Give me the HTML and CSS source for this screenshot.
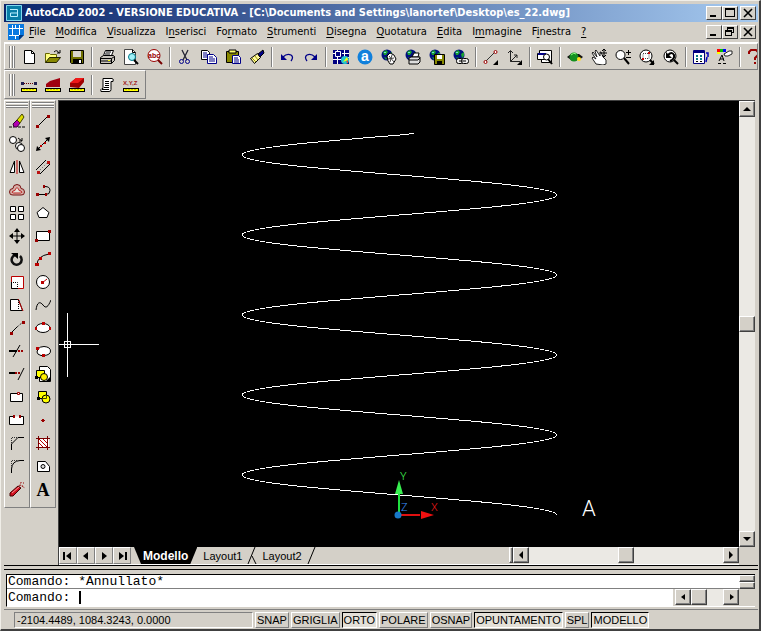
FILE: index.html
```html
<!DOCTYPE html>
<html lang="it">
<head>
<meta charset="utf-8">
<title>AutoCAD 2002</title>
<link rel="stylesheet" href="styles.css">
</head>
<body>
<svg class="defs" aria-hidden="true">
  <defs>
    <g id="globe"><circle cx="6" cy="6" r="5.5" fill="#001080"/><path d="M2 3l3-2 2 2-2 3-2 0zM8 5l3-2v4l-2 2zM3 8l3 1-1 2z" fill="#18a030"/><path d="M3 3h2v1H3z" fill="#70e0e0"/></g>
    <g id="ruler"><path d="M0 11h16v4H0z" fill="#000"/><path d="M1 12h14v2H1z" fill="#ff0"/><path d="M3 12v1M6 12v1M9 12v1M12 12v1" stroke="#880"/></g>
    <g id="corner"><path d="M15 11v5h-5z"/></g>
  </defs>
</svg>
<div class="window">
  <header class="titlebar">
    <svg class="app-icon" viewBox="0 0 16 16"><path d="M0 0h16v16H0z" fill="#087da6"/><path d="M.5.500h15v15H.5z" fill="none" stroke="#80d8f0"/><path d="M4 4.500h7.500v7h-7v-3.500h7" fill="none" stroke="#b9f0ff"/></svg>
    <h1>AutoCAD 2002 - VERSIONE EDUCATIVA - [C:\Documents and Settings\lanortef\Desktop\es_22.dwg]</h1>
    <div class="controls">
      <button aria-label="Riduci a icona"><svg viewBox="0 0 12 10"><path d="M2 7h6v2H2z"/></svg></button>
      <button aria-label="Ingrandisci"><svg viewBox="0 0 12 10"><path d="M1 0h10v9H1zM2 2v6h8V2z" fill-rule="evenodd"/></svg></button>
      <button class="close" aria-label="Chiudi"><svg viewBox="0 0 12 10"><path d="M2 1l8 8M10 1L2 9" stroke="#000" stroke-width="1.6"/></svg></button>
    </div>
  </header>
  <nav class="menubar">
    <svg class="doc-icon" viewBox="0 0 16 16"><path d="M0 0h16v11l-5 5H0z" fill="#0878e0"/><path d="M4.500 1v10M11.500 1v10M1 4.500h14M1 11.500h11M7.500 4v-3M7.500 12v3" fill="none" stroke="#fff"/><path d="M5 5h6v6H5z" fill="#0878e0"/><path d="M16 11h-5v5z" fill="#003880"/></svg>
    <div class="menus">
      <button><u>F</u>ile</button><button><u>M</u>odifica</button><button><u>V</u>isualizza</button><button>I<u>n</u>serisci</button><button>Fo<u>r</u>mato</button><button><u>S</u>trumenti</button><button><u>D</u>isegna</button><button><u>Q</u>uotatura</button><button><u>E</u>dita</button><button>I<u>m</u>magine</button><button>F<u>i</u>nestra</button><button><u>?</u></button>
    </div>
    <div class="controls">
      <button aria-label="Riduci disegno"><svg viewBox="0 0 12 10"><path d="M2 7h6v2H2z"/></svg></button>
      <button aria-label="Ripristina disegno"><svg viewBox="0 0 12 10"><path d="M3 0h7v6H8V5h1V2H4v1H3zM1 3h7v6H1zM2 5v3h5V5z" fill-rule="evenodd"/></svg></button>
      <button class="close" aria-label="Chiudi disegno"><svg viewBox="0 0 12 10"><path d="M2 1l8 8M10 1L2 9" stroke="#000" stroke-width="1.6"/></svg></button>
    </div>
  </nav>

  <div class="toolbar standard" role="toolbar" aria-label="Standard">
    <i class="grip"></i>
    <button aria-label="Nuovo"><svg viewBox="0 0 16 16"><path d="M3.500 1.500h7l3 3v10h-10z" fill="#fff" stroke="#000"/><path d="M10.500 1.500v3h3" fill="none" stroke="#000"/></svg></button>
    <button aria-label="Apri"><svg viewBox="0 0 16 16"><path d="M.5 13.500v-9h4l1 1h6v3" fill="#ffff80" stroke="#660"/><path d="M.5 13.500l4-5h11l-4 5z" fill="#880" stroke="#220"/><path d="M9 3q3-3 5 1M12 4h3V1" fill="none" stroke="#000"/></svg></button>
    <button aria-label="Salva"><svg viewBox="0 0 16 16"><path d="M1.500 1.500h13v13h-12l-1-1z" fill="#707000" stroke="#000"/><path d="M4 2h8v6H4z" fill="#d8d4cc"/><path d="M4 10h9v5H4z"/><path d="M10 11h2v3h-2z" fill="#fff"/></svg></button>
    <i class="sep"></i>
    <button aria-label="Stampa"><svg viewBox="0 0 16 16"><path d="M4.500 6.500l2-5h8l-2 5z" fill="#fff" stroke="#000"/><path d="M7 3h5M6 5h5" stroke="#000"/><path d="M1.500 8.500l3-2h10l1 1v4l-3 3h-11z" fill="#c8c4bc" stroke="#000"/><path d="M1.500 9.500h11l3-2M12.500 9.500v5M2 12h10" fill="none" stroke="#000"/><path d="M9 11h2v1H9z" fill="#ff0"/></svg></button>
    <button aria-label="Anteprima"><svg viewBox="0 0 16 16"><path d="M1.500.5h8l3 3v12h-11z" fill="#fff" stroke="#444"/><path d="M9.500.5v3h3" fill="none" stroke="#000"/><circle cx="9" cy="8" r="3.500" fill="#a0f0f8" stroke="#078"/><path d="M11 11l4 4" stroke="#000" stroke-width="2"/></svg></button>
    <button aria-label="Trova"><svg viewBox="0 0 16 16"><circle cx="7" cy="6.500" r="6" fill="#fff" stroke="#900"/><path d="M11 11l4 4" stroke="#700" stroke-width="2"/><text x="1" y="9" class="abc">abc</text></svg></button>
    <i class="sep"></i>
    <button aria-label="Taglia"><svg viewBox="0 0 16 16"><path d="M5 1l5 10M11 1L6 11" stroke="#223" stroke-width="1.300"/><circle cx="4.500" cy="12.500" r="2" fill="none" stroke="#008"/><circle cx="10.500" cy="12.500" r="2" fill="none" stroke="#008"/></svg></button>
    <button aria-label="Copia"><svg viewBox="0 0 16 16"><path d="M.5 1.500h6l2 2v7h-8z" fill="#fff" stroke="#000"/><path d="M2 4h4M2 6h5M2 8h5" stroke="#008"/><path d="M6.500 5.500h6l3 3v6h-9z" fill="#fff" stroke="#008"/><path d="M8 8h4M8 10h6M8 12h6" stroke="#008"/></svg></button>
    <button aria-label="Incolla"><svg viewBox="0 0 16 16"><path d="M1.500 2.500h12v11h-12z" fill="#880" stroke="#000"/><path d="M4 1h7v3H4z" fill="#ffff70" stroke="#000"/><path d="M7.500 6.500h6l2 2v6h-8z" fill="#fff" stroke="#008"/><path d="M9 9h4M9 11h5M9 13h5" stroke="#008"/></svg></button>
    <button aria-label="Corrispondenza proprietà"><svg viewBox="0 0 16 16"><path d="M1.500 9.500l7-5 3 4-6 6z" fill="#fff8a0" stroke="#000"/><path d="M3 9l4 4M6 7l3 4" stroke="#990"/><path d="M9 5l5-4 1 3-4 4z" fill="#008" stroke="#000"/></svg></button>
    <i class="sep"></i>
    <button aria-label="Annulla"><svg viewBox="0 0 16 16"><path d="M4 8q4-4 8-2 3 2 0 6" fill="none" stroke="#008" stroke-width="1.300"/><path d="M2 5v6h6z" fill="#008"/></svg></button>
    <button aria-label="Ripeti"><svg viewBox="0 0 16 16"><path d="M12 8Q8 4 4 6q-3 2 0 6" fill="none" stroke="#008" stroke-width="1.300"/><path d="M14 5v6H8z" fill="#008"/></svg></button>
    <i class="sep"></i>
    <button aria-label="Today"><svg viewBox="0 0 16 16"><path d="M0 1h16v14H0z" fill="#000080"/><path d="M4.500 1v14M0 10.500h8M9 4.500h7M9 8.500h7M11.500 1v7M0 4.500h3" stroke="#fff"/><path d="M2.500 2.500h5v5h-5z" fill="#000080" stroke="#fff"/><circle cx="12" cy="11" r="4" fill="#20c8d0"/><path d="M10 13l4-5 1 3z" fill="#ff0"/><path d="M13 13l2-2v3z" fill="#e33"/></svg></button>
    <button aria-label="Point A"><svg viewBox="0 0 16 16"><circle cx="8" cy="8" r="7.500" fill="#1080dc"/><text x="4" y="12" class="point-a">a</text></svg></button>
    <button aria-label="Incontro"><svg viewBox="0 0 16 16"><use href="#globe"/><path d="M6 7l3-3 4 2 2 4-3 5H9l-2-3z" fill="#fff" stroke="#000"/><path d="M8 7l5 6M11 6l-2 7M7 10l6-1" stroke="#444"/></svg></button>
    <button aria-label="Pubblica"><svg viewBox="0 0 16 16"><use href="#globe"/><path d="M7 8l2-4h5l-1 4z" fill="#fff" stroke="#000"/><path d="M4 9l2-1h9v5l-2 2H4z" fill="#ddd" stroke="#000"/><path d="M4 11h9l2-2" fill="none" stroke="#000"/></svg></button>
    <button aria-label="eTransmit"><svg viewBox="0 0 16 16"><use href="#globe"/><path d="M5.500 5.500h10v10h-10z" fill="#880" stroke="#000"/><path d="M8 6h5v4H8z" fill="#fff"/><path d="M8 12h5v3H8z"/></svg></button>
    <button aria-label="Collegamento"><svg viewBox="0 0 16 16"><use href="#globe"/><rect x="3.500" y="9.500" width="7" height="5" rx="2" fill="#eee" stroke="#000"/><rect x="8.500" y="9.500" width="7" height="5" rx="2" fill="#eee" stroke="#000"/><path d="M6 12h7" stroke="#000"/></svg></button>
    <i class="sep"></i>
    <button aria-label="Punto di tracciamento"><svg viewBox="0 0 16 16"><path d="M2 13L12 3" stroke="#333"/><circle cx="2.500" cy="13" r="1.500" fill="#fff" stroke="#900"/><circle cx="12.500" cy="3" r="1.500" fill="#fff" stroke="#900"/><use href="#corner"/></svg></button>
    <button aria-label="UCS"><svg viewBox="0 0 16 16"><path d="M3.500 2v10.500H13M3.500 12.500L10 6M1 4l2.500-2.500L6 4M7 6h3v3" fill="none" stroke="#222"/><use href="#corner"/></svg></button>
    <i class="sep"></i>
    <button aria-label="Viste con nome"><svg viewBox="0 0 16 16"><path d="M2.500 4V1.500h12v12h-10V11" fill="#fff" stroke="#000"/><path d="M.5 4.500h8v6h-8z" fill="#fff" stroke="#000"/><path d="M1 4h8v2H1z" fill="#008"/><circle cx="9.500" cy="8" r="3" fill="#fff" stroke="#000"/><path d="M11 10l4 5" stroke="#000" stroke-width="2"/></svg></button>
    <i class="sep"></i>
    <button aria-label="Orbita 3D"><svg viewBox="0 0 16 16"><path d="M0 8l4-3h8l4 3-4 3H4z" fill="#111"/><circle cx="7" cy="8" r="4.500" fill="#149020"/><path d="M4 6q3-3 5-1" fill="none" stroke="#90ff80"/><circle cx="12" cy="10" r="2" fill="#ffe020"/></svg></button>
    <button aria-label="Pan in tempo reale"><svg viewBox="0 0 16 16"><path d="M5 15L1 9l1-1 3 2-4-6 1-1 4 5-2-6 1-1 4 6 0-4 1 0 2 5 3 3v4l-3 1z" fill="#fff" stroke="#222"/><path d="M13 0v8M9 4h7M11 2l2-2 2 2M11 6l2 2 2-2" fill="none" stroke="#000"/></svg></button>
    <button aria-label="Zoom in tempo reale"><svg viewBox="0 0 16 16"><circle cx="5.500" cy="6" r="4.500" fill="#fff" stroke="#000"/><path d="M9 9l5 6" stroke="#000" stroke-width="2"/><path d="M11 3.500h5M13.500 1v5M11 8.500h5" stroke="#000"/></svg></button>
    <button aria-label="Zoom finestra"><svg viewBox="0 0 16 16"><circle cx="7" cy="7" r="6" fill="#fff" stroke="#000"/><path d="M11 11l4 4" stroke="#000" stroke-width="2"/><path d="M4 4.500h6v5H4z" fill="none" stroke="#444" stroke-dasharray="1"/><path d="M9 3h2v2H9zM3 9h2v2H3z" fill="#c00"/><use href="#corner"/></svg></button>
    <button aria-label="Zoom precedente"><svg viewBox="0 0 16 16"><circle cx="7" cy="7" r="6" fill="#fff" stroke="#000"/><path d="M11 11l4 4" stroke="#000" stroke-width="2"/><path d="M3 3v6h6z"/><path d="M5 6q4-4 6 0 1 4-4 6" fill="none" stroke="#000" stroke-width="2"/></svg></button>
    <i class="sep"></i>
    <button aria-label="Proprietà"><svg viewBox="0 0 16 16"><path d="M.5 1.500h11v13H.5z" fill="#fff" stroke="#000080"/><path d="M1 2h10v2H1z" fill="#000080"/><path d="M3 6h2v2H3zM7 6h2v2H7zM3 9h2v2H3zM7 9h2v2H7z" fill="#087880"/><path d="M3 12h2v1H3zM7 12h2v1H7z" fill="#000"/><path d="M13 4h2v4M14 8l-1 5" fill="none" stroke="#00b" stroke-width="1.500"/></svg></button>
    <button aria-label="DesignCenter"><svg viewBox="0 0 16 16"><path d="M0 0h3v3H0z" fill="#f00"/><path d="M3 0h3v3H3z" fill="#00c000"/><path d="M6 0h3v3H6z" fill="#00f"/><path d="M0 3h3v2H0z" fill="#ff0"/><path d="M7 5l5-3h3v3l-4 2H8z" fill="#fff" stroke="#222"/><path d="M2 12l3-6 2 6M3 10h4M1 14.500h3M6 14.500h3" fill="none" stroke="#000"/></svg></button>
    <i class="sep"></i>
    <button aria-label="Guida"><svg viewBox="0 0 16 16"><path d="M2 5V3l2-2h5l2 2v3L8 9v2" fill="none" stroke="#900" stroke-width="2"/><path d="M7 13h2v2H7z" fill="#900"/></svg></button>
  </div>

  <div class="toolbar inquiry" role="toolbar" aria-label="Interroga">
    <i class="grip"></i>
    <button aria-label="Distanza"><svg viewBox="0 0 16 16"><path d="M1 6.500h14" stroke="#600" stroke-dasharray="1"/><path d="M0 5h3v3H0zM13 5h3v3h-3z" fill="#202050"/><use href="#ruler"/></svg></button>
    <button aria-label="Area"><svg viewBox="0 0 16 16"><path d="M1 10V7l4-3 10-3v9z" fill="#a00010"/><use href="#ruler"/></svg></button>
    <button aria-label="Proprietà di massa"><svg viewBox="0 0 16 16"><path d="M1 10V6l6-5h8v4l-5 6z" fill="#a00000"/><path d="M1 6l6-5h8l-6 5z" fill="#f01818"/><use href="#ruler"/></svg></button>
    <i class="sep"></i>
    <button aria-label="Lista"><svg viewBox="0 0 16 16"><path d="M4 1.500h9q2 0 1 3h-2v8q0 2-2 2H2q-1-2 1-3h1z" fill="#fff" stroke="#000"/><path d="M6 4.500h4M6 6.500h4M6 8.500h4M5 10.500h5M3 12.500h7" stroke="#000"/></svg></button>
    <button aria-label="Individua punto"><svg viewBox="0 0 16 16"><text x="0" y="8" class="xyz">X,Y,Z</text><use href="#ruler"/></svg></button>
  </div>

  <main class="workspace">
    <div class="palette" role="toolbar" aria-label="Edita" aria-orientation="vertical">
      <i class="grip"></i>
      <button aria-label="Cancella"><svg viewBox="0 0 16 16"><path d="M0 14h5M9 14h7" stroke="#000" stroke-dasharray="3 1"/><path d="M4 11l4-4 3 3-3 4H5z" fill="#b000b0" stroke="#303"/><path d="M8 7l5-6 2 3-4 6z" fill="#dd0" stroke="#440"/></svg></button>
      <button aria-label="Copia oggetto"><svg viewBox="0 0 16 16"><circle cx="4" cy="4" r="3.500" fill="#fff" stroke="#000"/><circle cx="10" cy="10" r="3.500" fill="#fff" stroke="#000"/><circle cx="12" cy="12" r="3.500" fill="#fff" stroke="#000"/><path d="M9 2l4 3M13 2v3h-3" fill="none" stroke="#000"/></svg></button>
      <button aria-label="Specchio"><svg viewBox="0 0 16 16"><path d="M1 13.500h4.500V2zM15 13.500h-4.500V2z" fill="#fff" stroke="#000"/><path d="M8 1v14" stroke="#b00"/></svg></button>
      <button aria-label="Offset"><svg viewBox="0 0 16 16"><path d="M4 6.500q0-4 4-4t4 4q3.500 0 3.500 3.500t-3.500 3H4Q.5 13.500.5 10T4 6.500z" fill="#d8b0a8" stroke="#711"/><path d="M4 9q2.500 0 2.500-2 1.500-3 3 0 0 2 2.500 2 2 1.500-.5 2h-7Q2 10.500 4 9z" fill="#e8e4dc" stroke="#b22"/></svg></button>
      <button aria-label="Serie"><svg viewBox="0 0 16 16"><path d="M1.500 1.500h5v5h-5zM9.500 1.500h5v5h-5zM1.500 9.500h5v5h-5zM9.500 9.500h5v5h-5z" fill="#fff" stroke="#000"/></svg></button>
      <button aria-label="Sposta"><svg viewBox="0 0 16 16"><path d="M8 1v14M1 8h14" stroke="#000"/><path d="M8 0l3 4H5zM8 16l3-4H5zM0 8l4-3v6zM16 8l-4-3v6z"/></svg></button>
      <button aria-label="Ruota"><svg viewBox="0 0 16 16"><path d="M6 4a5 5 0 1 0 5 1" fill="none" stroke="#111" stroke-width="2.500"/><path d="M2 2h7v6z"/></svg></button>
      <button aria-label="Scala"><svg viewBox="0 0 16 16"><path d="M2.500 2.500h12v12h-12z" fill="#fff" stroke="#b00"/><path d="M2 8.500h6.500V15" fill="none" stroke="#000" stroke-dasharray="1"/><path d="M2.500 8v6.500H9" fill="none" stroke="#000"/></svg></button>
      <button aria-label="Stira"><svg viewBox="0 0 16 16"><path d="M1.500 2.500h8l4 11h-12z" fill="#fff" stroke="#000"/><path d="M9 2l5 12" stroke="#b00"/><path d="M9.500 3v10" stroke="#000" stroke-dasharray="1"/></svg></button>
      <button aria-label="Allunga"><svg viewBox="0 0 16 16"><path d="M3 12l5-5" stroke="#000"/><path d="M8 7l6-5" stroke="#000" stroke-dasharray="1"/><path d="M1 12h3v3H1zM13 1h3v3h-3z" fill="#900"/></svg></button>
      <button aria-label="Taglia oggetto"><svg viewBox="0 0 16 16"><path d="M0 8h8" stroke="#000" stroke-width="2"/><path d="M9 8h6" stroke="#900" stroke-width="2" stroke-dasharray="2 1"/><path d="M4 14L11 2" stroke="#000"/></svg></button>
      <button aria-label="Estendi"><svg viewBox="0 0 16 16"><path d="M0 7h6" stroke="#000" stroke-width="2"/><path d="M6 7h5" stroke="#900" stroke-width="2" stroke-dasharray="2 1"/><path d="M9 14l6-12" stroke="#000"/></svg></button>
      <button aria-label="Spezza in un punto"><svg viewBox="0 0 16 16"><path d="M1.500 4.500h12v8h-12z" fill="#fff" stroke="#000"/><path d="M8.500 3.500h2v2h-2z" fill="#fff" stroke="#900"/></svg></button>
      <button aria-label="Spezza"><svg viewBox="0 0 16 16"><path d="M4 4.500H.5v8h14v-8H12" fill="#fff" stroke="#000"/><path d="M4 3h2v3H4zM10 3h2v3h-2z" fill="#900"/></svg></button>
      <button aria-label="Cima"><svg viewBox="0 0 16 16"><path d="M2.500 15V9L9 2.500h6" fill="none" stroke="#000"/><path d="M2.500 8V2.500H9" fill="none" stroke="#333" stroke-dasharray="1"/></svg></button>
      <button aria-label="Raccordo"><svg viewBox="0 0 16 16"><path d="M2.500 15v-4Q3 3 11 2.500h4" fill="none" stroke="#000"/><path d="M2.500 10V2.500H9" fill="none" stroke="#333" stroke-dasharray="1"/></svg></button>
      <button aria-label="Esplodi"><svg viewBox="0 0 16 16"><path d="M1 12l8-7 3 2-8 8H1z" fill="#d01020" stroke="#400"/><path d="M3 12l7-6" stroke="#ff9090"/><path d="M10 5l2-3M12 1v1M14 2h1M13 5h2M11 4l5 3" stroke="#900" stroke-dasharray="1"/></svg></button>
    </div>
    <div class="palette" role="toolbar" aria-label="Disegna" aria-orientation="vertical">
      <i class="grip"></i>
      <button aria-label="Linea"><svg viewBox="0 0 16 16"><path d="M3 13L13 3" stroke="#000"/><path d="M1 12h3v3H1zM12 2h3v3h-3z" fill="#900"/></svg></button>
      <button aria-label="Linea di costruzione"><svg viewBox="0 0 16 16"><path d="M2 14L14 2" stroke="#000"/><path d="M1 15l1-5 4 4zM15 1l-5 1 4 4z"/><path d="M5 9h2v2H5zM9 6h2v2H9z" fill="#b00"/></svg></button>
      <button aria-label="Multilinea"><svg viewBox="0 0 16 16"><path d="M1 11L11 1M5 15L15 5" stroke="#000"/><path d="M3 13L13 3" stroke="#555" stroke-dasharray="1 2"/><path d="M2 12h3v3H2zM12 2h3v3h-3z" fill="#b11"/></svg></button>
      <button aria-label="Polilinea"><svg viewBox="0 0 16 16"><path d="M2 12.500h9q4 0 4-4t-5-4H8" fill="none" stroke="#000"/><path d="M1 11h3v3H1zM10 11h2v3h-2zM8 3h2v3H8z" fill="#900"/></svg></button>
      <button aria-label="Poligono"><svg viewBox="0 0 16 16"><path d="M8 2.500l6 5-2 5H4l-2-5z" fill="#fff" stroke="#000"/></svg></button>
      <button aria-label="Rettangolo"><svg viewBox="0 0 16 16"><path d="M1.500 3.500h13v9h-13z" fill="#fff" stroke="#000"/><path d="M13 2h3v3h-3zM0 11h3v3H0z" fill="#900"/></svg></button>
      <button aria-label="Arco"><svg viewBox="0 0 16 16"><path d="M2 14q0-9 12-11" fill="none" stroke="#000"/><path d="M0 12h4v3H0zM4 6h3v3H4zM13 1h3v3h-3z" fill="#b00"/></svg></button>
      <button aria-label="Cerchio"><svg viewBox="0 0 16 16"><circle cx="8" cy="8" r="6.500" fill="#fff" stroke="#000"/><path d="M7 9l5-4" stroke="#b00"/><path d="M6 7h3v3H6z" fill="#b00"/></svg></button>
      <button aria-label="Spline"><svg viewBox="0 0 16 16"><path d="M1 13c1-8 4-9 7-5s5 2 8-5" fill="none" stroke="#000"/></svg></button>
      <button aria-label="Ellisse"><svg viewBox="0 0 16 16"><ellipse cx="8" cy="8" rx="7" ry="4.500" fill="#fff" stroke="#000"/><path d="M0 7h2v3H0zM14 7h2v3h-2zM7 2h3v3H7z" fill="#b00"/></svg></button>
      <button aria-label="Arco ellittico"><svg viewBox="0 0 16 16"><path d="M3 6q2-2.500 6-2.500 6.500.5 6.500 4.500T9 12.500H6Q2 11.500 2 9z" fill="#fff" stroke="#000"/><path d="M1 4h3v3H1zM7 11h3v3H7z" fill="#b00"/></svg></button>
      <button aria-label="Inserisci blocco"><svg viewBox="0 0 16 16"><path d="M4.500.5h8l3 3v12h-11z" fill="#fff" stroke="#000"/><path d="M1.500 4.500h8v7h-8z" fill="#ff0" stroke="#000"/><circle cx="9" cy="11" r="3.500" fill="#fff000" stroke="#000"/><path d="M0 10h3v3H0z"/><use href="#corner"/></svg></button>
      <button aria-label="Crea blocco"><svg viewBox="0 0 16 16"><path d="M3.500 2.500h8v7h-8z" fill="#ff0" stroke="#000"/><circle cx="11" cy="10" r="4" fill="#ff0" stroke="#000"/><path d="M7 9.500h4.500V6" fill="none" stroke="#440"/><path d="M2 8h3v3H2z"/></svg></button>
      <button aria-label="Punto"><svg viewBox="0 0 16 16"><path d="M7 7h2v3H7zM6 8h4v1H6z" fill="#900"/></svg></button>
      <button aria-label="Tratteggio"><svg viewBox="0 0 16 16"><path d="M3 3h11v10H3z" fill="#fff"/><path d="M3 3l10 10M7 3l6 6M3 7l6 6M11 3l2 2M3 11l2 2" stroke="#b00"/><path d="M1 3.500h14M1 12.500h14M3.500 1v14M12.500 1v14" stroke="#700"/></svg></button>
      <button aria-label="Regione"><svg viewBox="0 0 16 16"><path d="M2.500 3.500h8l4 5v5h-12z" fill="#fff" stroke="#000"/><circle cx="8" cy="8.500" r="2" fill="#ddd" stroke="#000"/></svg></button>
      <button class="text-tool" aria-label="Testo multilinea">A</button>
    </div>

    <section class="document">
      <svg class="drawing" viewBox="59 101 680 446" preserveAspectRatio="xMinYMin slice" role="img" aria-label="Elica">
        <path class="helix" d="M414 133.500L400 135C321 141.400 242 147.700 242 155C242 169.600 557 180.400 557 195S242 220.400 242 235S557 260.400 557 275S242 300.400 242 315S557 340.400 557 355S242 380.400 242 395S557 420.400 557 435S242 460.400 242 475S557 500.400 557 515"/>
        <path class="cross" d="M59 344.500h40M67.500 313v64M64.500 341.500h6v6h-6z"/>
        <path d="M398 514v-20h2v20z" fill="#20e040"/><path d="M399 480l4 14h-8z" fill="#38f050"/>
        <path d="M400 514h20v2h-20z" fill="#e01010"/><path d="M434 515l-13-4v8z" fill="#f01010"/>
        <circle cx="398" cy="515" r="3.500" fill="#1878c8"/>
        <text x="400" y="480" class="axis axis-y">Y</text><text x="401" y="511" class="axis axis-z">Z</text><text x="431" y="511" class="axis axis-x">X</text>
        <text x="582" y="516" class="label">A</text>
      </svg>
      <div class="vscroll" aria-hidden="true">
        <span class="key"><svg viewBox="0 0 12 12"><path d="M2 8h8L6 4z"/></svg></span>
        <span class="track"></span><span class="key thumb"></span><span class="track"></span>
        <span class="key"><svg viewBox="0 0 12 12"><path d="M2 4h8L6 8z"/></svg></span>
      </div>
      <div class="tabrow">
        <div class="navkeys">
          <button aria-label="Prima scheda"><svg viewBox="0 0 12 12"><path d="M1 2h2v8H1zM9 2v8L4 6z"/></svg></button><button aria-label="Scheda precedente"><svg viewBox="0 0 12 12"><path d="M8 2v8L3 6z"/></svg></button><button aria-label="Scheda successiva"><svg viewBox="0 0 12 12"><path d="M4 2v8l5-4z"/></svg></button><button aria-label="Ultima scheda"><svg viewBox="0 0 12 12"><path d="M9 2h2v8H9zM3 2v8l5-4z"/></svg></button>
        </div>
        <div class="tabs" role="tablist">
          <button class="tab active" role="tab" aria-selected="true">Modello</button>
          <button class="tab" role="tab">Layout1</button><svg class="edge" viewBox="0 0 10 17"><path d="M8 0L1 17M5 9l4 8" fill="none" stroke="#000"/></svg>
          <button class="tab" role="tab">Layout2</button><svg class="edge" viewBox="0 0 10 17"><path d="M8 0L1 17" fill="none" stroke="#000"/></svg>
        </div>
        <div class="hscroll" aria-hidden="true">
          <span class="key split"></span>
          <span class="key"><svg viewBox="0 0 12 12"><path d="M8 2v8L4 6z"/></svg></span>
          <span class="track"></span><span class="key thumb"></span><span class="track"></span>
          <span class="key"><svg viewBox="0 0 12 12"><path d="M4 2v8l4-4z"/></svg></span>
        </div>
      </div>
    </section>
  </main>

  <div class="splitter"></div>

  <section class="command">
    <div class="history"><output>Comando: *Annullato*</output>
      <span class="spin" aria-hidden="true"><span class="key"></span><span class="key"></span></span></div>
    <div class="prompt">
      <label for="cmd">Comando:</label><input id="cmd" type="text" autocomplete="off"><i class="caret"></i>
      <div class="cmdscroll" aria-hidden="true">
        <span class="key"><svg viewBox="0 0 12 12"><path d="M8 3v6L4 6z"/></svg></span><span class="key"></span><span class="track"></span><span class="key"><svg viewBox="0 0 12 12"><path d="M5 3v6l4-3z"/></svg></span>
      </div>
    </div>
  </section>

  <footer class="status">
    <output class="coords">-2104.4489, 1084.3243, 0.0000</output>
    <button>SNAP</button><button>GRIGLIA</button><button class="on">ORTO</button><button>POLARE</button><button>OSNAP</button><button class="on">OPUNTAMENTO</button><button>SPL</button><button class="on">MODELLO</button>
  </footer>
</div>
</body>
</html>
```

FILE: styles.css
```css
:root {
  --face: #d4d0c8;
  --shade: #808080;
  --dark: #404040;
}

* { box-sizing: border-box; }

body {
  margin: 0;
  background: var(--face);
  color: #000;
  font: 11px/14px "DejaVu Sans Condensed", "DejaVu Sans", sans-serif;
}

button {
  margin: 0;
  padding: 0;
  border: 0;
  background: none;
  color: inherit;
  font: inherit;
  white-space: nowrap;
}

svg { display: block; }

.defs { position: absolute; width: 0; height: 0; }

.window {
  display: flex;
  flex-direction: column;
  height: 100vh;
  min-height: 560px;
  padding: 3px 1px 0 3px;
  border: solid;
  border-width: 1px 2px 2px 1px;
  border-color: #f0eee8 var(--dark) var(--dark) #f0eee8;
  overflow: hidden;
}

/* Title and menu */

.titlebar {
  display: flex;
  align-items: center;
  height: 18px;
  padding: 0 2px;
  gap: 3px;
  background: linear-gradient(to right, #0a246a, #a6caf0);
}

.titlebar h1 {
  flex: 1;
  margin: 0;
  color: #fff;
  font-size: 11px;
  font-weight: bold;
  white-space: nowrap;
  overflow: hidden;
}

.app-icon, .doc-icon { width: 16px; height: 16px; flex: none; }

.controls { display: flex; }

.controls button {
  width: 16px;
  height: 14px;
  padding: 1px;
  background: var(--face);
  border: 1px solid;
  border-color: #fff var(--dark) var(--dark) #fff;
}

.controls svg { width: 12px; height: 10px; }
.controls .close { margin-left: 2px; }

.menubar {
  display: flex;
  align-items: center;
  height: 21px;
  padding: 0 2px 0 4px;
  border-bottom: 1px solid #fff;
}

.menus { display: flex; flex: 1; gap: 10px; padding-left: 5px; }
.menus u { text-underline-offset: 2px; }

/* Toolbars */

.toolbar {
  display: flex;
  align-items: center;
  height: 27px;
  padding-left: 4px;
  border: 1px solid;
  border-color: #fff var(--shade) var(--shade) #fff;
  overflow: hidden;
}

.toolbar > button { flex: none; width: 24px; height: 24px; padding: 4px; }
.toolbar svg { width: 16px; height: 16px; }
.inquiry { align-self: flex-start; height: 29px; padding-right: 2px; }

.grip {
  flex: none;
  width: 6px;
  height: 22px;
  margin-right: 2px;
  border: solid;
  border-width: 0 1px;
  border-color: var(--shade);
  background: linear-gradient(to right, #fff 1px, var(--face) 1px 2px, var(--shade) 2px 3px, #fff 3px);
}

.sep {
  flex: none;
  width: 2px;
  height: 20px;
  margin: 0 2px;
  border-left: 1px solid var(--shade);
  border-right: 1px solid #fff;
}

.abc { font: bold 7px "Liberation Sans", sans-serif; fill: #900; }
.point-a { font: bold 14px "Liberation Sans", sans-serif; fill: #fff; }
.xyz { font: bold 6px "Liberation Sans", sans-serif; fill: #a01818; }

/* Drawing area */

.workspace { display: flex; flex: 1; min-height: 0; padding: 1px 3px 0 0; }

.palette {
  align-self: flex-start;
  display: flex;
  flex-direction: column;
  align-items: center;
  width: 26px;
  padding: 1px 0 6px;
  border: 1px solid;
  border-color: #fff var(--shade) var(--shade) #fff;
}

.palette button { width: 24px; height: 23px; padding: 3px 4px 4px; }
.palette svg { width: 16px; height: 16px; }

.palette .grip {
  width: 22px;
  height: 6px;
  margin: 0 0 2px;
  border-width: 1px 0;
  background: linear-gradient(#fff 1px, var(--face) 1px 2px, var(--shade) 2px 3px, #fff 3px);
}

.palette .text-tool { padding: 0; font: bold 18px/22px "Liberation Serif", serif; }

.document {
  flex: 1;
  display: grid;
  grid-template: minmax(0, 1fr) 18px / minmax(0, 1fr) 16px;
  margin-left: 2px;
  border: solid;
  border-width: 1px 0 0 1px;
  border-color: var(--dark);
}

.drawing { width: 100%; height: 100%; background: #000; }
.helix, .cross { fill: none; stroke: #fff; shape-rendering: crispEdges; }
.axis { font: 300 11px Roboto, "Liberation Sans", sans-serif; }
.axis-x { fill: #f01818; }
.axis-y { fill: #40f050; }
.axis-z { fill: #3890ff; }
.label { font: 300 22px Roboto, "Liberation Sans", sans-serif; fill: #fff; }

.key {
  flex: none;
  width: 16px;
  height: 16px;
  padding: 1px;
  background: var(--face);
  border: 1px solid;
  border-color: #fff var(--dark) var(--dark) #fff;
  box-shadow: inset -1px -1px var(--shade);
}

.key svg { width: 12px; height: 12px; }
.track { flex: 1; background: #ebe9e4; }

.vscroll { display: flex; flex-direction: column; }

.tabrow { display: flex; min-width: 0; border-bottom: 1px solid #fff; }
.navkeys { display: flex; flex: none; }

.navkeys button {
  width: 18px;
  height: 17px;
  padding: 2px;
  border: 1px solid;
  border-color: #fff var(--shade) var(--shade) #fff;
}

.navkeys svg { width: 12px; height: 12px; }

.tabs { display: flex; flex: 1; margin-left: 3px; }
.tab { height: 17px; padding: 0 1px; font: 11px/16px "Liberation Sans", sans-serif; }

.tab.active {
  padding: 0 9px;
  margin-right: 5px;
  background: #000;
  color: #fff;
  font: bold 12px/16px "Liberation Sans", sans-serif;
  clip-path: polygon(0 0, 100% 0, calc(100% - 7px) 100%, 7px 100%);
}

.edge { flex: none; width: 10px; height: 17px; margin: 0 4px; }

.hscroll { display: flex; flex: 0 0 230px; }
.hscroll .split { width: 4px; padding: 0; }

/* Command line */

.splitter {
  flex: none;
  height: 5px;
  border: solid #000;
  border-width: 1px 0;
}

.command {
  flex: none;
  margin: 4px 3px 0 2px;
  border: solid;
  border-width: 1px 0 1px 1px;
  border-color: #000 #fff #fff #000;
  font: 13px/14px "Liberation Mono", monospace;
}

.history { display: flex; height: 14px; padding-left: 1px; background: #fff; border-bottom: 1px solid var(--shade); }
.history output { flex: 1; }
.spin { display: flex; flex-direction: column; }
.spin .key { height: 7px; padding: 0; }
.prompt { display: flex; align-items: center; height: 17px; padding-left: 1px; background: #fff; }
.prompt input { order: 1; flex: 1; min-width: 0; height: 15px; padding: 0; border: 0; outline: 0; background: none; font: inherit; }
.caret { width: 2px; height: 13px; margin-left: 9px; background: #000; }
.cmdscroll { display: flex; order: 2; align-self: stretch; flex: 0 0 82px; padding: 0 16px 0 2px; background: var(--face); }

/* Status bar */

.status {
  flex: none;
  display: flex;
  align-items: center;
  gap: 2px;
  height: 20px;
  margin-top: 2px;
  padding-left: 10px;
  border-top: 1px solid var(--shade);
  font: 11px/14px "Liberation Sans", sans-serif;
}

.status > * {
  height: 16px;
  padding: 0 1px;
  border: 1px solid;
  border-color: #fff var(--shade) var(--shade) #fff;
}

.status .coords {
  flex: 0 0 239px;
  padding-left: 2px;
  border-color: var(--shade) #fff #fff var(--shade);
}

.status .on { border-color: #000 #fff #fff #000; background: #e4e0d8; }
```
